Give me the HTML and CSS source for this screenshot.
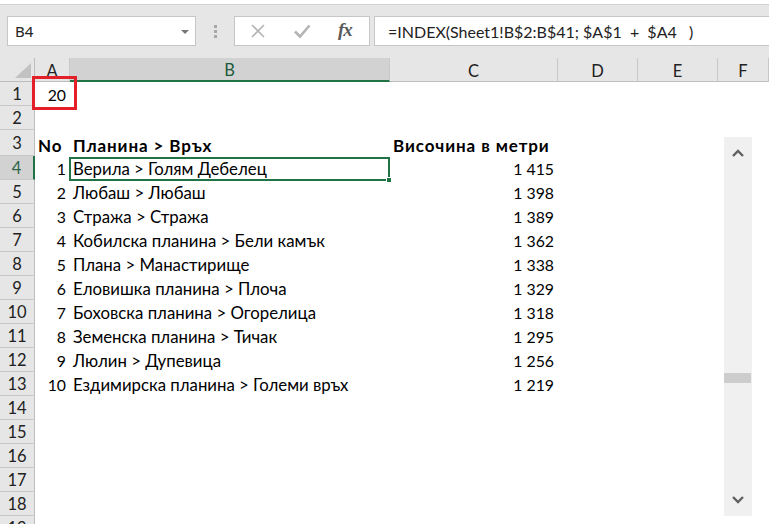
FILE: index.html
```html
<!DOCTYPE html>
<html lang="bg">
<head>
<meta charset="utf-8">
<title>Excel – INDEX</title>
<link rel="stylesheet" href="styles.css">
</head>
<body>
<div class="app">
  <div class="ribbon-edge"></div>
  <div class="fbar">
    <div class="namebox">
      <span class="nb-text">B4</span>
      <svg class="caret" width="8" height="4" viewBox="0 0 8 4"><path d="M0 0H8L4 4Z" fill="#777"/></svg>
    </div>
    <div class="grip"><i></i><i></i><i></i></div>
    <div class="fbtns">
      <svg class="ico" width="16" height="16" viewBox="0 0 16 16"><path d="M2 2L14 14M14 2L2 14" stroke="#b4b4b4" stroke-width="1.6" fill="none"/></svg>
      <svg class="ico" width="18" height="16" viewBox="0 0 18 16"><path d="M2 8.5L7 13.5L16.5 2.5" stroke="#b4b4b4" stroke-width="2.6" fill="none"/></svg>
      <span class="fx">fx</span>
    </div>
    <div class="finput">=INDEX(Sheet1!B$2:B$41; $A$1  +  $A4   )</div>
  </div>

  <div class="sheet">
    <div class="row colhead">
      <div class="corner"><svg width="16" height="15" viewBox="0 0 16 15"><path d="M16 0V15H0Z" fill="#c2c2c2"/></svg></div>
      <div class="ch">A</div>
      <div class="ch sel">B</div>
      <div class="ch">C</div>
      <div class="ch">D</div>
      <div class="ch">E</div>
      <div class="ch">F</div>
    </div>

    <div class="row"><div class="rh">1</div><div class="c num a1">20<div class="redbox"></div></div></div>
    <div class="row"><div class="rh">2</div></div>
    <div class="row r3"><div class="rh">3</div><div class="c b">No</div><div class="c b">Планина &gt; Връх</div><div class="c b">Височина в метри</div></div>
    <div class="row"><div class="rh selrow">4</div><div class="c num">1</div><div class="c txt active">Верила &gt; Голям Дебелец<div class="selbox"><i class="handle"></i></div></div><div class="c num">1 415</div></div>
    <div class="row"><div class="rh">5</div><div class="c num">2</div><div class="c txt">Любаш &gt; Любаш</div><div class="c num">1 398</div></div>
    <div class="row"><div class="rh">6</div><div class="c num">3</div><div class="c txt">Стража &gt; Стража</div><div class="c num">1 389</div></div>
    <div class="row"><div class="rh">7</div><div class="c num">4</div><div class="c txt">Кобилска планина &gt; Бели камък</div><div class="c num">1 362</div></div>
    <div class="row"><div class="rh">8</div><div class="c num">5</div><div class="c txt">Плана &gt; Манастирище</div><div class="c num">1 338</div></div>
    <div class="row"><div class="rh">9</div><div class="c num">6</div><div class="c txt">Еловишка планина &gt; Плоча</div><div class="c num">1 329</div></div>
    <div class="row"><div class="rh">10</div><div class="c num">7</div><div class="c txt">Боховска планина &gt; Огорелица</div><div class="c num">1 318</div></div>
    <div class="row"><div class="rh">11</div><div class="c num">8</div><div class="c txt">Земенска планина &gt; Тичак</div><div class="c num">1 295</div></div>
    <div class="row"><div class="rh">12</div><div class="c num">9</div><div class="c txt">Люлин &gt; Дупевица</div><div class="c num">1 256</div></div>
    <div class="row"><div class="rh">13</div><div class="c num">10</div><div class="c txt">Ездимирска планина &gt; Големи връх</div><div class="c num">1 219</div></div>
    <div class="row"><div class="rh">14</div></div>
    <div class="row"><div class="rh">15</div></div>
    <div class="row"><div class="rh">16</div></div>
    <div class="row"><div class="rh">17</div></div>
    <div class="row"><div class="rh">18</div></div>
    <div class="row"><div class="rh">19</div></div>

    <div class="scrollbar">
      <svg class="arrow-up" width="12" height="8" viewBox="0 0 12 8"><path d="M1 7L6 2L11 7" stroke="#606060" stroke-width="2.4" fill="none"/></svg>
      <div class="thumb"></div>
      <svg class="arrow-down" width="12" height="8" viewBox="0 0 12 8"><path d="M1 1L6 6L11 1" stroke="#606060" stroke-width="2.4" fill="none"/></svg>
    </div>
  </div>
</div>
</body>
</html>
```

FILE: styles.css
```css
* { box-sizing: border-box; }
html, body { margin: 0; padding: 0; background: #fff; }
body {
  width: 769px;
  height: 524px;
  overflow: hidden;
  font-family: Lato, "Noto Sans", sans-serif;
  color: #000;
}
.app { width: 769px; height: 524px; overflow: hidden; }

.ribbon-edge {
  height: 5px;
  background: #fff;
  border-bottom: 1px solid #d2d2d2;
}

.fbar {
  height: 53px;
  background: #e6e6e6;
  display: flex;
  align-items: flex-start;
  padding-top: 11px;
  padding-left: 7px;
}
.namebox {
  width: 189px;
  height: 30px;
  background: #fff;
  border: 1px solid #c6c6c6;
  display: flex;
  align-items: center;
  justify-content: space-between;
  padding: 0 6px 0 7px;
  font-family: "Noto Sans", "Open Sans", sans-serif;
  font-size: 15px;
  color: #222;
}
.caret { margin-top: 1px; }
.grip {
  width: 38px;
  height: 30px;
  display: flex;
  flex-direction: column;
  align-items: center;
  justify-content: center;
  gap: 2px;
}
.grip i {
  display: block;
  width: 3px;
  height: 3px;
  background: #a8a8a8;
}
.fbtns {
  width: 136px;
  height: 30px;
  background: #fff;
  border: 1px solid #c6c6c6;
  display: flex;
  align-items: center;
  padding-left: 15px;
}
.fbtns .ico:nth-child(1) { margin-right: 27px; }
.fbtns .ico:nth-child(2) { margin-right: 27px; }
.fx {
  font-family: "Liberation Serif", "DejaVu Serif", serif;
  font-style: italic;
  font-weight: 700;
  font-size: 19px;
  color: #5a5a5a;
  letter-spacing: -1px;
  margin-top: -2px;
}
.finput {
  flex: 1;
  height: 30px;
  margin-left: 4px;
  margin-right: -2px;
  background: #fff;
  border: 1px solid #c6c6c6;
  display: flex;
  align-items: center;
  padding-left: 13px;
  font-family: Lato, "Noto Sans", sans-serif;
  font-size: 16px;
  color: #222;
  white-space: pre;
}

.sheet { position: relative; }
.row {
  display: grid;
  grid-template-columns: 35px 35px 320px 168px 80px 80px 1fr;
  height: 24px;
}
.row.r3 { height: 26px; }

.colhead { background: #e6e6e6; }
.corner {
  border-right: 1px solid #bdbdbd;
  border-bottom: 1px solid #bdbdbd;
  display: flex;
  align-items: flex-end;
  justify-content: flex-end;
  padding: 0 3px 3px 0;
}
.ch {
  border-right: 1px solid #c8c8c8;
  border-bottom: 1px solid #bdbdbd;
  display: flex;
  align-items: center;
  justify-content: center;
  font-size: 16.5px;
  color: #222;
  padding-top: 2px;
}
.ch.sel {
  background: #d2d2d2;
  border-bottom: 2px solid #217346;
  color: #1d5a3c;
}

.rh {
  grid-column: 1;
  background: #e6e6e6;
  border-right: 1px solid #bdbdbd;
  border-bottom: 1px solid #c8c8c8;
  display: flex;
  align-items: center;
  justify-content: center;
  font-size: 16.5px;
  color: #222;
}
.rh.selrow {
  background: #d2d2d2;
  border-right: 2px solid #217346;
  color: #2c6549;
}

.c {
  position: relative;
  display: flex;
  align-items: center;
  padding: 1px 3px 0 3px;
  font-size: 15.8px;
  white-space: nowrap;
}
.c.txt { font-size: 16.8px; }
.c.num { justify-content: flex-end; padding-right: 4px; }
.c.b {
  font-weight: 700;
  font-size: 17px;
  letter-spacing: 0.9px;
  padding-top: 4px;
}

.selbox {
  position: absolute;
  left: -1px;
  top: 1px;
  right: 0;
  bottom: -1px;
  border: 2px solid #217346;
}
.handle {
  position: absolute;
  right: -4px;
  bottom: -4px;
  width: 6px;
  height: 6px;
  background: #217346;
  border: 1px solid #fff;
}

.redbox {
  position: absolute;
  left: -3px;
  top: -6px;
  width: 45px;
  height: 34px;
  border: 3px solid #e3202a;
}

.scrollbar {
  position: absolute;
  left: 724px;
  top: 79px;
  width: 28px;
  height: 379px;
  background: #f0f0f0;
}
.arrow-up { position: absolute; left: 8px; top: 12px; }
.arrow-down { position: absolute; left: 8px; bottom: 12px; }
.thumb {
  position: absolute;
  left: 0;
  top: 236px;
  width: 27px;
  height: 10px;
  background: #cdcdcd;
}
```
